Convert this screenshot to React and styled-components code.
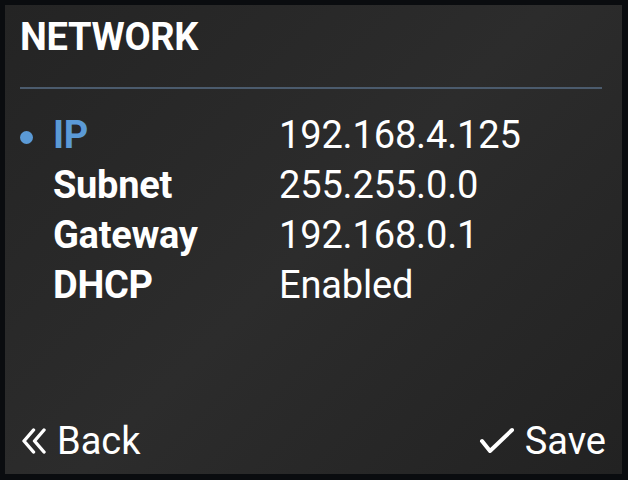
import React from "react";
import styled, { createGlobalStyle } from "styled-components";

const Global = createGlobalStyle`
  html, body { margin: 0; padding: 0; background: #0a0c0f; }
  body { width: 628px; height: 480px; overflow: hidden; font-family: Roboto, "Liberation Sans", sans-serif; }
`;

const Screen = styled.div`
  width: 628px;
  height: 480px;
  box-sizing: border-box;
  padding: 5px 6px 6px 5px;
  background: #0a0c0f;
  display: flex;
`;

const Panel = styled.div`
  flex: 1;
  display: flex;
  flex-direction: column;
  box-sizing: border-box;
  padding: 10px 20px 13px 15px;
  background: linear-gradient(135deg, #242424 0%, #2c2c2c 50%, #222222 100%);
  color: #ffffff;
`;

const Title = styled.h1`
  margin: 0;
  font-size: 38px;
  line-height: 44px;
  font-weight: 700;
  letter-spacing: -0.3px;
`;

const Divider = styled.div`
  height: 2px;
  margin: 28px 0 21px 0;
  background: #4b5b6d;
`;

const Rows = styled.div`
  display: grid;
  grid-template-columns: 33px 226px 1fr;
`;

const Bullet = styled.span`
  display: flex;
  align-items: center;
  &::before {
    content: "";
    display: ${(p) => (p.$on ? "block" : "none")};
    width: 13px;
    height: 13px;
    margin-left: 0;
    margin-top: 4px;
    border-radius: 50%;
    background: #5b9ad6;
  }
`;

const Label = styled.span`
  font-size: 38px;
  line-height: 50px;
  font-weight: 700;
  color: ${(p) => (p.$on ? "#5b9ad6" : "#ffffff")};
  letter-spacing: -0.3px;
`;

const Value = styled.span`
  font-size: 38px;
  line-height: 50px;
  font-weight: 400;
  color: #ffffff;
  letter-spacing: -0.15px;
`;

const Footer = styled.div`
  margin-top: auto;
  display: flex;
  justify-content: space-between;
  align-items: center;
`;

const Action = styled.div`
  display: flex;
  align-items: center;
  gap: ${(p) => p.$gap}px;
  font-size: 38px;
  line-height: 40px;
  color: #ffffff;
  margin-left: ${(p) => p.$ml || 0}px;
  margin-right: ${(p) => p.$mr || 0}px;
`;

const Icon = styled.svg`
  display: block;
  flex: none;
`;

const rows = [
  { label: "IP", value: "192.168.4.125", on: true },
  { label: "Subnet", value: "255.255.0.0" },
  { label: "Gateway", value: "192.168.0.1" },
  { label: "DHCP", value: "Enabled" },
];

export default function App() {
  return (
    <>
      <Global />
      <Screen>
        <Panel>
          <Title>NETWORK</Title>
          <Divider />
          <Rows>
            {rows.map((r) => (
              <React.Fragment key={r.label}>
                <Bullet $on={r.on} />
                <Label $on={r.on}>{r.label}</Label>
                <Value>{r.value}</Value>
              </React.Fragment>
            ))}
          </Rows>
          <Footer>
            <Action $gap={10} $ml={1}>
              <Icon width="26" height="26" viewBox="0 0 26 26" fill="none" stroke="#fff" strokeWidth="3.4" strokeLinecap="round" strokeLinejoin="round">
                <path d="M12.5 2 L3 13 L12.5 24" />
                <path d="M23 2 L13.5 13 L23 24" />
              </Icon>
              Back
            </Action>
            <Action $gap={10} $mr={-4}>
              <Icon width="36" height="28" viewBox="0 0 36 28" fill="none" stroke="#fff" strokeWidth="4" strokeLinecap="round" strokeLinejoin="round">
                <path d="M3 14 L11 24 L33 3" />
              </Icon>
              Save
            </Action>
          </Footer>
        </Panel>
      </Screen>
    </>
  );
}
